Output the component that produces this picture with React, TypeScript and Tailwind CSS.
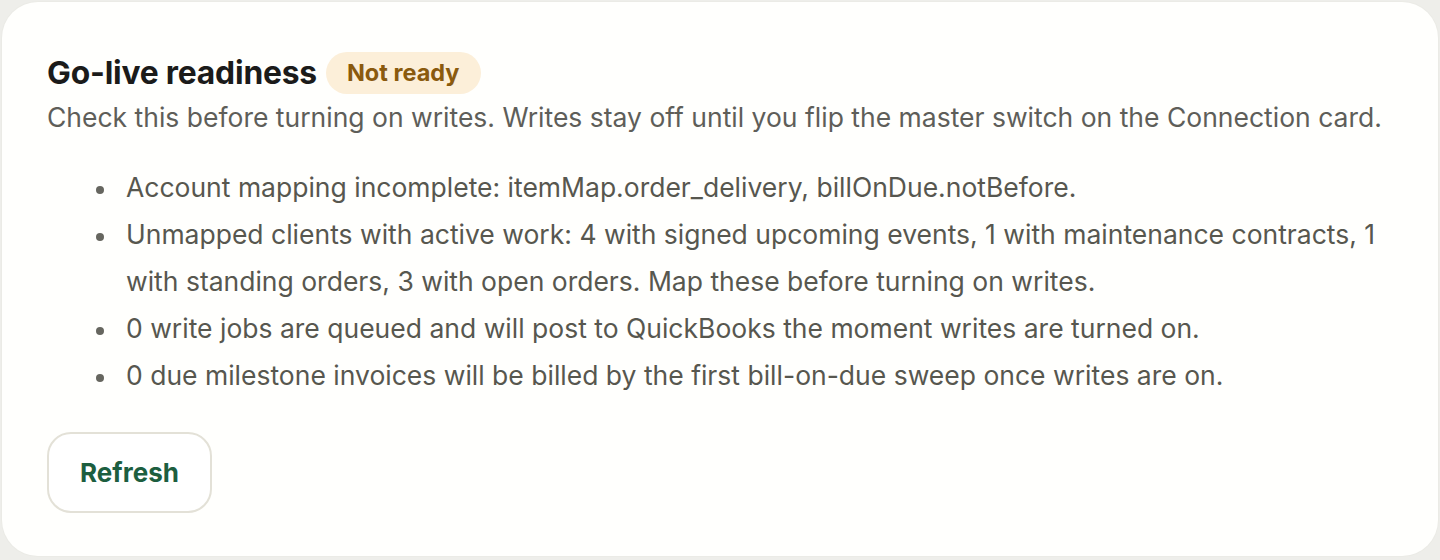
import React from 'react'

const blockers = [
  'Account mapping incomplete: itemMap.order_delivery, billOnDue.notBefore.',
  'Unmapped clients with active work: 4 with signed upcoming events, 1 with maintenance contracts, 1 with standing orders, 3 with open orders. Map these before turning on writes.',
  '0 write jobs are queued and will post to QuickBooks the moment writes are turned on.',
  '0 due milestone invoices will be billed by the first bill-on-due sweep once writes are on.',
]

const App = () => {
  return (
    <div className="min-h-[560px] bg-[#eeeeea] p-[2px] font-['Inter','Liberation_Sans',sans-serif]">
      <section className="min-h-[554px] rounded-[36px] bg-[#fffffd] px-[45px] pt-[50px] pb-[42px] shadow-[0_0_0_1px_#ebebe6]">
        {/* Header */}
        <div className="flex items-center gap-[9px]">
          <h2 className="text-[31.8px] leading-[42px] font-bold tracking-[-0.2px] text-[#1b1b1a]">Go-live readiness</h2>
          <span className="flex h-[42px] items-center rounded-full bg-[#fcefd9] px-[21px] text-[23.5px] font-bold text-[#8a5a0e]">
            Not ready
          </span>
        </div>
        <p className="mt-[5px] text-[26.5px] leading-[36px] text-[#5e5e59]">
          Check this before turning on writes. Writes stay off until you flip the master switch on the Connection card.
        </p>

        {/* Blockers */}
        <ul className="mt-[29px] pl-[45px] text-[26.5px] leading-[47px] text-[#57574f]">
          {blockers.map((b, i) => (
            <li key={i} className="flex">
              <span className="flex h-[47px] w-[34px] shrink-0 items-center pt-[4px] pl-[4px]">
                <span className="h-[8px] w-[8px] rounded-full bg-[#66665f]" />
              </span>
              <span>{b}</span>
            </li>
          ))}
        </ul>

        <button className="mt-[33px] h-[81px] w-[165px] rounded-[24px] border-2 border-[#e3e1d7] bg-white text-[26px] font-bold text-[#1d5e3f]">
          Refresh
        </button>
      </section>
    </div>
  )
}

export default App
